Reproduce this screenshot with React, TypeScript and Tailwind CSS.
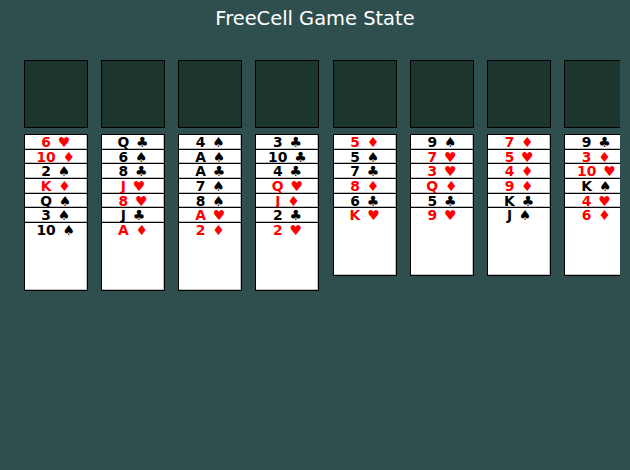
const columns = [
  ['6 ♥', '10 ♦', '2 ♠', 'K ♦', 'Q ♠', '3 ♠', '10 ♠'],
  ['Q ♣', '6 ♠', '8 ♣', 'J ♥', '8 ♥', 'J ♣', 'A ♦'],
  ['4 ♠', 'A ♠', 'A ♣', '7 ♠', '8 ♠', 'A ♥', '2 ♦'],
  ['3 ♣', '10 ♣', '4 ♣', 'Q ♥', 'J ♦', '2 ♣', '2 ♥'],
  ['5 ♦', '5 ♠', '7 ♣', '8 ♦', '6 ♣', 'K ♥'],
  ['9 ♠', '7 ♥', '3 ♥', 'Q ♦', '5 ♣', '9 ♥'],
  ['7 ♦', '5 ♥', '4 ♦', '9 ♦', 'K ♣', 'J ♠'],
  ['9 ♣', '3 ♦', '10 ♥', 'K ♠', '4 ♥', '6 ♦'],
];

function Card({ label, last }: { label: string; last: boolean }) {
  const red = label.includes('♥') || label.includes('♦');
  return (
    <div
      className={`border border-black bg-white text-center text-[13.89px] leading-[14px] font-bold whitespace-pre [word-spacing:2px] shadow-[inset_-1px_-1px_0_rgba(0,0,0,0.25)] ${
        last ? 'h-[69px]' : 'h-[15.7px] -mb-px'
      } ${red ? 'text-[#ff0000]' : 'text-black'}`}
    >
      {label}
    </div>
  );
}

export default function App() {
  return (
    <div className="h-[470px] w-[630px] overflow-hidden bg-[#2f4f4f] font-['DejaVu_Sans',sans-serif]">
      <h1 className="pt-[8px] text-center text-[19.44px] leading-[22px] font-normal text-white">FreeCell Game State</h1>
      <div className="mt-[30px] ml-[23.6px] flex w-[596.4px] gap-[13.05px] overflow-hidden pb-[2px]">
        {columns.map((cards, i) => (
          <div key={i} className="w-[64.2px] shrink-0">
            <div className="h-[68px] border border-black bg-[#1c352d]" />
            <div className="mt-[6px] flex flex-col">
              {cards.map((label, j) => (
                <Card key={label} label={label} last={j === cards.length - 1} />
              ))}
            </div>
          </div>
        ))}
      </div>
    </div>
  );
}
